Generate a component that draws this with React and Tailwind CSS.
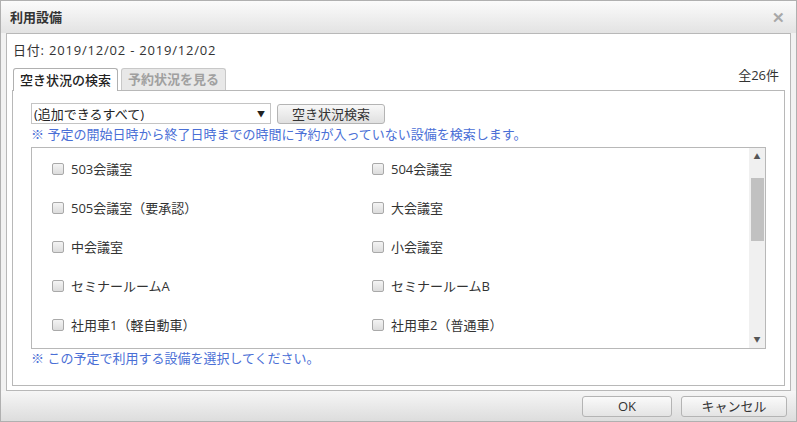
import React from 'react'

const FONT = { fontFamily: '"Open Sans", "Noto Sans CJK JP", sans-serif' }

const ITEMS = [
  ['503会議室', '504会議室'],
  ['505会議室（要承認）', '大会議室'],
  ['中会議室', '小会議室'],
  ['セミナールームA', 'セミナールームB'],
  ['社用車1（軽自動車）', '社用車2（普通車）'],
]

function Check({ label }) {
  return (
    <label className="flex items-center h-[39px] w-[320px] shrink-0">
      <span className="w-[12px] h-[12px] rounded-[2px] border border-[#a9a9a9] bg-gradient-to-b from-[#f4f4f4] to-[#dcdcdc]" />
      <span className="ml-[7px] text-[13px] leading-[18px] text-[#333]">{label}</span>
    </label>
  )
}

export default function App() {
  return (
    <div style={FONT} className="w-[797px] h-[422px] border border-[#b0b0b0] flex flex-col bg-[#f2f2f2] overflow-hidden">
      {/* header */}
      <div className="h-[32px] shrink-0 flex items-center justify-between pl-[9px] pr-[11px] bg-gradient-to-b from-[#fbfbfb] to-[#e3e3e3]">
        <span className="text-[13px] font-bold text-[#333] leading-[18px]">利用設備</span>
        <span className="text-[15px] font-bold text-[#a8a8a8] leading-none">✕</span>
      </div>

      {/* body */}
      <div className="flex-1 px-[5px] flex flex-col">
        <div className="h-[358px] border border-[#b8b8b8] bg-white flex flex-col px-[5px] pb-[4px]">
          <div className="pt-[7px] pl-[1px] text-[13px] leading-[18px] tracking-[0.8px] text-[#333]">日付: 2019/12/02 - 2019/12/02</div>

          {/* tabs */}
          <div className="mt-[7px] flex items-end justify-between relative z-10">
            <div className="flex items-end gap-[3px] pl-[1px]">
              <div className="h-[23px] px-[6px] border border-b-0 border-[#b0b0b0] rounded-t-[3px] bg-white text-[13px] font-medium text-[#222] leading-[22px] -mb-[1px]">空き状況の検索</div>
              <div className="h-[22px] px-[6px] border border-b-0 border-[#c8c8c8] rounded-t-[3px] bg-[#e8e8e8] text-[13px] font-bold text-[#a0a0a0] leading-[21px]">予約状況を見る</div>
            </div>
            <div className="text-[13px] leading-[18px] text-[#333] pr-[6px] pb-[6px]">全26件</div>
          </div>

          {/* tab panel */}
          <div className="flex-1 border border-[#b8b8b8] bg-white px-[18px] pt-[12px] flex flex-col">
            <div className="flex items-center gap-[6px]">
              <div className="w-[240px] h-[21px] border border-[#c4c4c4] flex items-center justify-between pl-[2px] pr-[5px] text-[13px] text-[#222]">
                <span className="leading-[18px]">(追加できるすべて)</span>
                <span className="text-[8px] leading-none">▼</span>
              </div>
              <div className="w-[108px] h-[20px] border border-[#b4b4b4] rounded-[3px] bg-gradient-to-b from-[#f8f8f8] to-[#e0e0e0] flex items-center justify-center text-[13px] text-[#333] leading-[18px]">空き状況検索</div>
            </div>
            <div className="mt-[1px] text-[13px] leading-[18px] text-[#4a6fd6]">※ 予定の開始日時から終了日時までの時間に予約が入っていない設備を検索します。</div>

            <div className="mt-[4px] h-[202px] border border-[#b8b8b8] flex">
              <div className="flex-1 pl-[20px] pt-[1px] overflow-hidden">
                {ITEMS.map(([a, b]) => (
                  <div key={a} className="flex">
                    <Check label={a} />
                    <Check label={b} />
                  </div>
                ))}
              </div>
              <div className="w-[16px] bg-[#f0f0f0] flex flex-col items-center">
                <span className="h-[17px] text-[7px] leading-[17px] text-[#555]">▲</span>
                <div className="mt-[13px] w-[13px] h-[63px] bg-[#c1c1c1]" />
                <div className="flex-1" />
                <span className="h-[17px] text-[7px] leading-[17px] text-[#555]">▼</span>
              </div>
            </div>
            <div className="text-[13px] leading-[18px] text-[#4a6fd6]">※ この予定で利用する設備を選択してください。</div>
          </div>
        </div>
      </div>

      {/* footer */}
      <div className="h-[31px] shrink-0 flex items-center justify-end gap-[9px] pr-[9px] bg-gradient-to-b from-[#f6f6f6] to-[#dcdcdc]">
        <div className="w-[90px] h-[21px] border border-[#b4b4b4] rounded-[3px] bg-gradient-to-b from-[#fafafa] to-[#e4e4e4] flex items-center justify-center text-[13px] text-[#333]">OK</div>
        <div className="w-[106px] h-[21px] border border-[#b4b4b4] rounded-[3px] bg-gradient-to-b from-[#fafafa] to-[#e4e4e4] flex items-center justify-center text-[13px] text-[#333]">キャンセル</div>
      </div>
    </div>
  )
}
